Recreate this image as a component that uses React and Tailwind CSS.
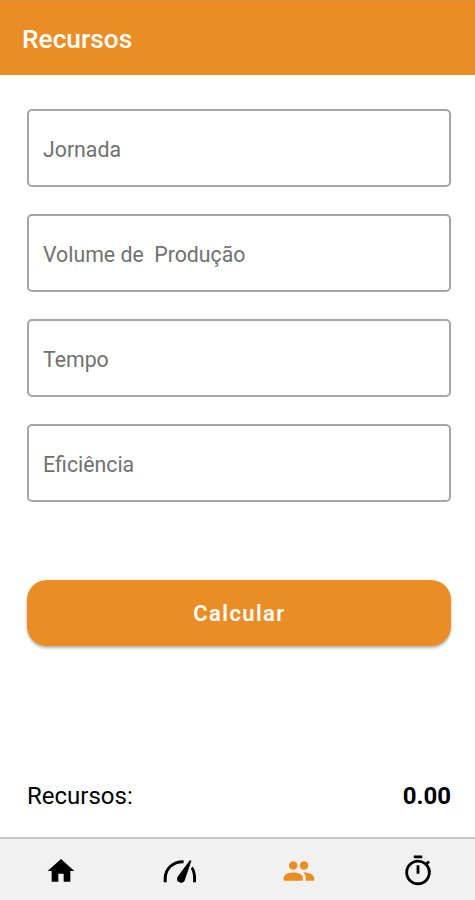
import React, { useState } from "react";
import { MdHome, MdOutlineTimer } from "react-icons/md";

const fields = ["Jornada", "Volume de  Produção", "Tempo", "Eficiência"];

const GaugeIcon = () => (
  <svg width="34" height="24" viewBox="0 0 34 24" fill="currentColor">
    <path
      d="M2.2 23.3V19.5C2.2 10 9.5 2.6 20.6 2.8"
      fill="none"
      stroke="currentColor"
      strokeWidth="3"
    />
    <path d="M26.8 1.2 28.4 1.7 22 20.5A3.9 3.9 0 0 1 14.2 18.7C14.4 18 14.7 17.5 15.1 17Z" />
    <path d="M29.6 7.4C32.4 11 33.4 15.5 33 23.3H30.1C30.4 17 29.8 13 27.9 9.8Z" />
  </svg>
);

const PeopleIcon = () => (
  <svg width="32" height="20" viewBox="0 0 32 20" fill="currentColor">
    <circle cx="10.2" cy="4.5" r="4.3" />
    <circle cx="21" cy="4.5" r="4.3" />
    <path d="M.5 17.5C.5 13.5 5 11.5 10.3 11.5S20 13.5 20 17.5V18.5C20 19.3 19.5 19.8 18.7 19.8H1.8C1 19.8.5 19.3.5 18.5Z" />
    <path d="M20.2 11.6C26 11.4 31.3 13.8 31.3 17.5V18.5C31.3 19.3 30.8 19.8 30 19.8H22.6C23.4 16.5 22.8 13.7 20.2 11.6Z" />
  </svg>
);

const tabs = [
  { id: "inicio", icon: <MdHome size={32} /> },
  { id: "eficiencia", icon: <GaugeIcon /> },
  { id: "recursos", icon: <PeopleIcon /> },
  { id: "tempo", icon: <MdOutlineTimer size={34} /> },
];

const App = () => {
  const [activeTab, setActiveTab] = useState("recursos");

  return (
    <div className="flex flex-col h-screen bg-white font-[Roboto,sans-serif]">
      <header className="flex items-center h-[75px] shrink-0 px-[22px] pt-0.5 bg-[#eb8d25] border-t border-[#dc8a3c]">
        <h1 className="text-[26.3px] leading-8 font-medium text-white">Recursos</h1>
      </header>

      <main className="flex flex-col flex-1 pl-[27px] pr-6 pt-[34px]">
        <div className="flex flex-col gap-[27px]">
          {fields.map((field) => (
            <input
              key={field}
              aria-label={field}
              placeholder={field}
              className="w-full h-[78px] px-3.5 pt-0.5 border-2 border-[#a6a6a6] rounded-[5px] text-[21.3px] text-black placeholder:text-[#717171] outline-none"
            />
          ))}
        </div>

        <button className="h-[66px] mt-[78px] shrink-0 rounded-[20px] bg-[#eb8d25] text-white text-[22px] font-semibold tracking-[1.4px] pl-px shadow-[0_2px_3px_rgba(0,0,0,0.3)]">
          Calcular
        </button>

        <div className="flex items-center justify-between mt-auto mb-[25px] text-2xl text-black">
          <span>Recursos:</span>
          <span className="font-bold">0.00</span>
        </div>
      </main>

      <nav className="grid grid-cols-4 h-[63px] shrink-0 bg-[#f1f1f1] border-t-2 border-[#c6c6c6]">
        {tabs.map((tab) => (
          <button
            key={tab.id}
            onClick={() => setActiveTab(tab.id)}
            className={
              activeTab === tab.id
                ? "flex items-center justify-center pt-[3px] pl-1 text-[#eb8d25]"
                : "flex items-center justify-center pt-[3px] pl-1 text-black"
            }
          >
            {tab.icon}
          </button>
        ))}
      </nav>
    </div>
  );
};

export default App;
